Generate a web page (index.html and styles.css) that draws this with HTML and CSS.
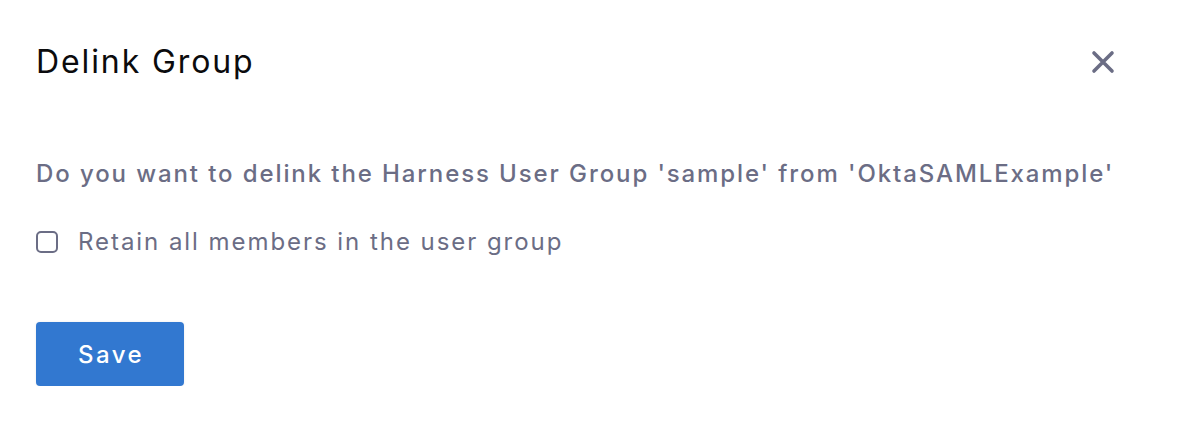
FILE: index.html
```html
<!DOCTYPE html>
<html>
<head>
<meta charset="utf-8">
<link rel="stylesheet" href="styles.css">
</head>
<body>
<div class="dialog">
  <div class="header">
    <h1 class="title">Delink Group</h1>
    <button class="close" aria-label="Close">
      <svg width="24" height="24" viewBox="0 0 24 24"><path d="M3 3 L21 21 M21 3 L3 21" stroke="#6b6d85" stroke-width="3.6" stroke-linecap="round" fill="none"/></svg>
    </button>
  </div>
  <p class="message">Do you want to delink the Harness User Group 'sample' from 'OktaSAMLExample'</p>
  <label class="check">
    <span class="box"></span>
    <span class="check-label">Retain all members in the user group</span>
  </label>
  <div class="footer">
    <button class="save">Save</button>
  </div>
</div>
</body>
</html>
```
FILE: styles.css
```css
* { box-sizing: border-box; }
html, body { margin: 0; padding: 0; background: #fff; }
body { font-family: Inter, "Noto Sans", sans-serif; }
.dialog { padding: 36px 36px 0 36px; width: 1177px; }
.header { display: flex; align-items: center; justify-content: space-between; height: 52px; }
.title { margin: 0; font-size: 32px; font-weight: 400; color: #0b0b0d; line-height: 52px; letter-spacing: 1.9px; }
.close { border: 0; background: none; padding: 0; margin-right: 26px; width: 24px; height: 24px; display: flex; }
.message { margin: 70px 0 0 0; font-size: 24px; font-weight: 500; color: #6b6d85; line-height: 32px; letter-spacing: 1.9px; white-space: nowrap; }
.check { display: flex; align-items: center; gap: 20px; margin-top: 36px; }
.box { width: 22px; height: 22px; border: 2px solid #6b6d85; border-radius: 5px; }
.check-label { font-size: 24px; color: #6b6d85; line-height: 32px; letter-spacing: 1.95px; }
.footer { margin-top: 64px; }
.save { width: 148px; height: 64px; border: 0; border-radius: 4px; background: #3278d0; color: #fff; font-family: inherit; font-size: 24px; font-weight: 500; letter-spacing: 2.4px; padding: 0 0 0 2px; box-shadow: 0 0 3px rgba(0,0,0,0.08); }
```
